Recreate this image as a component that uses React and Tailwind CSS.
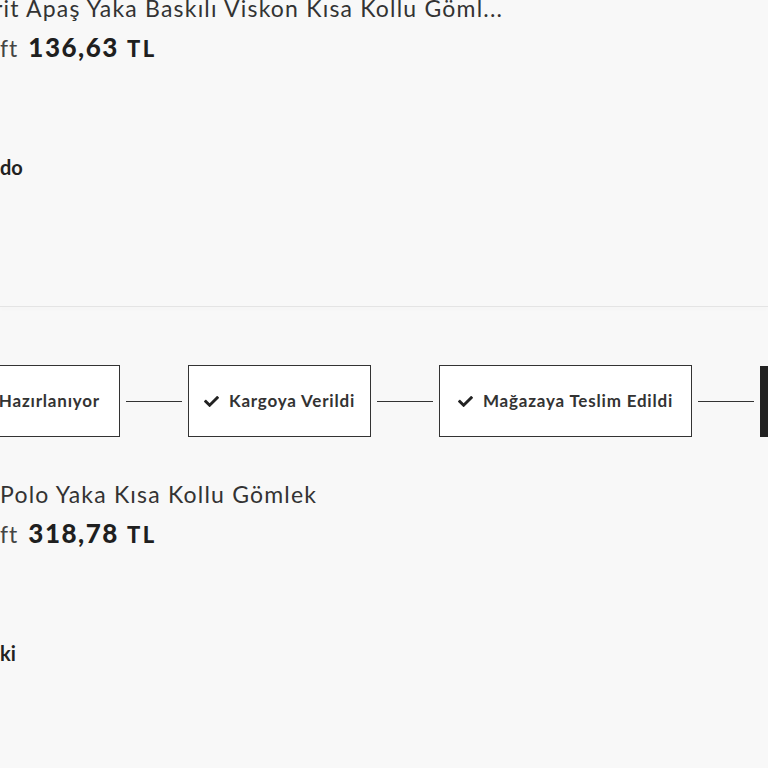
import { FaCheck } from "react-icons/fa";

const ITEMS = [
  { title: "rit Apaş Yaka Baskılı Viskon Kısa Kollu Göml...", titleShift: "-ml-[6px]", price: "136,63", label: "do", steps: false },
  { title: "Polo Yaka Kısa Kollu Gömlek", titleShift: "ml-0", price: "318,78", label: "ki", steps: true },
];

function Connector() {
  return <div className="mx-[6px] h-px w-[56px] shrink-0 bg-[#333]" />;
}

function Step({ children, className = "", check = true }) {
  return (
    <div
      className={`flex h-[72px] shrink-0 items-center whitespace-nowrap border border-[#333] bg-white text-[17px] font-bold tracking-[0.8px] text-[#333] ${className}`}
    >
      {check && <FaCheck className="mr-[10px] text-[15px] text-[#222]" />}
      {children}
    </div>
  );
}

function Steps() {
  return (
    <div className="-ml-[200px] flex h-[72px] items-center">
      <Step check={false} className="w-[320px] justify-end pr-[19px]">
        Hazırlanıyor
      </Step>
      <Connector />
      <Step className="w-[183px] justify-center">Kargoya Verildi</Step>
      <Connector />
      <Step className="w-[253px] justify-center">Mağazaya Teslim Edildi</Step>
      <Connector />
      <div className="h-[71px] w-[200px] shrink-0 bg-[#222]" />
    </div>
  );
}

export default function App() {
  return (
    <div
      className="h-[768px] w-[768px] overflow-hidden bg-[#f8f8f8]"
      style={{ fontFamily: "Lato, 'Noto Sans', sans-serif" }}
    >
      <div className="-mt-[121px] flex flex-col">
        {ITEMS.map((item) => (
          <section key={item.price} className="flex flex-col">
            {item.steps ? <Steps /> : <div className="h-[72px]" />}
            <p
              className={`mt-[43px] whitespace-nowrap text-[23px] leading-[28px] tracking-[1.2px] text-[#333] ${item.titleShift}`}
            >
              {item.title}
            </p>
            <div className="mt-[9px] flex items-baseline whitespace-nowrap leading-[32px]">
              <span className="text-[23px] tracking-[1px] text-[#444]">ft</span>
              <span className="ml-[10px] text-[26px] font-black tracking-[1.5px] text-[#1f1f1f]">{item.price}</span>
              <span className="ml-[8px] text-[22px] font-black tracking-[2.5px] text-[#1f1f1f]">TL</span>
            </div>
            <p className="mt-[90px] text-[20px] font-bold leading-[24px] text-[#222]">{item.label}</p>
            <div className="mt-[127px] h-px w-full bg-[#e4e4e4] shadow-[0_2px_3px_rgba(0,0,0,0.04)]" />
            <div className="h-[58px]" />
          </section>
        ))}
      </div>
    </div>
  );
}
